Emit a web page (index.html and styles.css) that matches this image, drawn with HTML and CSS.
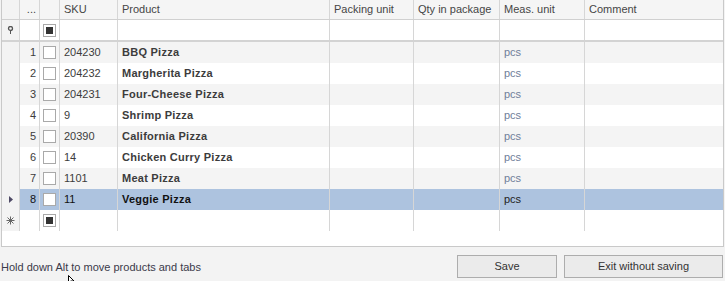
FILE: index.html
```html
<!DOCTYPE html>
<html>
<head>
<meta charset="utf-8">
<link rel="stylesheet" href="styles.css">
</head>
<body>
<div class="page">
  <div class="grid">
    <div class="row head">
      <div class="c ind"></div>
      <div class="c num center">...</div>
      <div class="c chk"></div>
      <div class="c">SKU</div>
      <div class="c">Product</div>
      <div class="c">Packing unit</div>
      <div class="c">Qty in package</div>
      <div class="c">Meas. unit</div>
      <div class="c last">Comment</div>
    </div>
    <div class="row filter">
      <div class="c ind"><svg width="7" height="9" viewBox="0 0 7 9"><circle cx="3.5" cy="2.5" r="2" fill="none" stroke="#555" stroke-width="1.3"/><rect x="3" y="4" width="1" height="4" fill="#555"/></svg></div>
      <div class="c num"></div>
      <div class="c chk"><span class="box"><span class="fill"></span></span></div>
      <div class="c"></div><div class="c"></div><div class="c"></div><div class="c"></div><div class="c"></div><div class="c last"></div>
    </div>
    <div class="rows">
      <div class="row odd"><div class="c ind"></div><div class="c num">1</div><div class="c chk"><span class="box"></span></div><div class="c">204230</div><div class="c b">BBQ Pizza</div><div class="c"></div><div class="c"></div><div class="c unit">pcs</div><div class="c last"></div></div>
      <div class="row"><div class="c ind"></div><div class="c num">2</div><div class="c chk"><span class="box"></span></div><div class="c">204232</div><div class="c b">Margherita Pizza</div><div class="c"></div><div class="c"></div><div class="c unit">pcs</div><div class="c last"></div></div>
      <div class="row odd"><div class="c ind"></div><div class="c num">3</div><div class="c chk"><span class="box"></span></div><div class="c">204231</div><div class="c b">Four-Cheese Pizza</div><div class="c"></div><div class="c"></div><div class="c unit">pcs</div><div class="c last"></div></div>
      <div class="row"><div class="c ind"></div><div class="c num">4</div><div class="c chk"><span class="box"></span></div><div class="c">9</div><div class="c b">Shrimp Pizza</div><div class="c"></div><div class="c"></div><div class="c unit">pcs</div><div class="c last"></div></div>
      <div class="row odd"><div class="c ind"></div><div class="c num">5</div><div class="c chk"><span class="box"></span></div><div class="c">20390</div><div class="c b">California Pizza</div><div class="c"></div><div class="c"></div><div class="c unit">pcs</div><div class="c last"></div></div>
      <div class="row"><div class="c ind"></div><div class="c num">6</div><div class="c chk"><span class="box"></span></div><div class="c">14</div><div class="c b">Chicken Curry Pizza</div><div class="c"></div><div class="c"></div><div class="c unit">pcs</div><div class="c last"></div></div>
      <div class="row odd"><div class="c ind"></div><div class="c num">7</div><div class="c chk"><span class="box"></span></div><div class="c">1101</div><div class="c b">Meat Pizza</div><div class="c"></div><div class="c"></div><div class="c unit">pcs</div><div class="c last"></div></div>
      <div class="row sel"><div class="c ind"><svg width="4" height="7" viewBox="0 0 4 7"><path d="M0 0 L4 3.5 L0 7 Z" fill="#4f4a66"/></svg></div><div class="c num">8</div><div class="c chk"><span class="box"></span></div><div class="c">11</div><div class="c b">Veggie Pizza</div><div class="c"></div><div class="c"></div><div class="c unit">pcs</div><div class="c last"></div></div>
      <div class="row newrow"><div class="c ind"><svg width="9" height="9" viewBox="0 0 9 9"><g stroke="#666" stroke-width="1"><line x1="4.5" y1="0.5" x2="4.5" y2="8.5"/><line x1="0.5" y1="4.5" x2="8.5" y2="4.5"/><line x1="1.5" y1="1.5" x2="7.5" y2="7.5"/><line x1="7.5" y1="1.5" x2="1.5" y2="7.5"/></g></svg></div><div class="c num"></div><div class="c chk"><span class="box"><span class="fill"></span></span></div><div class="c"></div><div class="c"></div><div class="c"></div><div class="c"></div><div class="c"></div><div class="c last"></div></div>
    </div>
  </div>
  <div class="footer">
    <span class="status">Hold down Alt to move products and tabs</span>
    <div class="buttons">
      <button class="btn save">Save</button>
      <button class="btn exit">Exit without saving</button>
    </div>
  </div>
  <svg class="cursor" width="10" height="8" viewBox="0 0 10 8"><path d="M0.5 0.5 L0.5 8 L2.5 6 L6 6 Z" fill="#fff" stroke="#000" stroke-width="1"/></svg>
</div>
</body>
</html>
```
FILE: styles.css
```css
* { box-sizing: border-box; }
html, body { margin: 0; padding: 0; }
body {
  background: #f3f3f3;
  font-family: "Liberation Sans", Arial, sans-serif;
  font-size: 11px;
  color: #3c3c3c;
  width: 725px;
  height: 281px;
  overflow: hidden;
}
.page { position: relative; width: 725px; height: 281px; }
.grid {
  margin-left: 1px;
  width: 723px;
  height: 247px;
  background: #fff;
  border: 1px solid #c9c9c9;
  border-top: 0;
}
.row {
  display: grid;
  grid-template-columns: 18px 20px 20px 58px 212px 84px 86px 85px 1fr;
  height: 21px;
}
.c {
  border-right: 1px solid #d6d6d6;
  padding: 0 4px 1px;
  display: flex;
  align-items: center;
  white-space: nowrap;
  overflow: hidden;
}
.c.last { border-right: 0; }
.head { height: 20px; background: #f5f5f5; border-bottom: 1px solid #d0d0d0; color: #454545; }
.center { justify-content: center; }
.filter { height: 22px; border-bottom: 2px solid #d3d3d3; }
.ind { background: #f3f3f3; justify-content: center; padding: 0; }
.num { justify-content: flex-end; padding: 0 3px 1px 0; }
.chk { justify-content: center; padding: 0; }
.box {
  width: 13px; height: 13px;
  border: 1px solid #a9a9a9;
  background: #fff;
  display: flex; align-items: center; justify-content: center;
}
.fill { width: 7px; height: 7px; background: #333; }
.odd { background: #f4f4f4; }
.b { font-weight: bold; color: #3c3c3c; letter-spacing: 0.25px; }
.unit { color: #70809a; }
.sel { background: #adc3df; color: #111; }
.sel .b { color: #111; }
.sel .unit { color: #222; }
.rows .row .ind { background: #f3f3f3; }
.footer {
  display: flex;
  justify-content: space-between;
  align-items: center;
  height: 30px;
  margin-top: 4px;
}
.status { padding-left: 1px; color: #3a3a4a; position: relative; top: 1px; }
.buttons { display: flex; gap: 7px; margin-right: 2px; }
.btn {
  font-family: "Liberation Sans", Arial, sans-serif;
  font-size: 11px;
  color: #333;
  background: #ebebeb;
  border: 1px solid #adadad;
  height: 23px;
  padding: 0;
  margin: 0;
}
.save { width: 100px; }
.exit { width: 159px; }
.cursor { position: absolute; left: 68px; top: 275px; }
```
